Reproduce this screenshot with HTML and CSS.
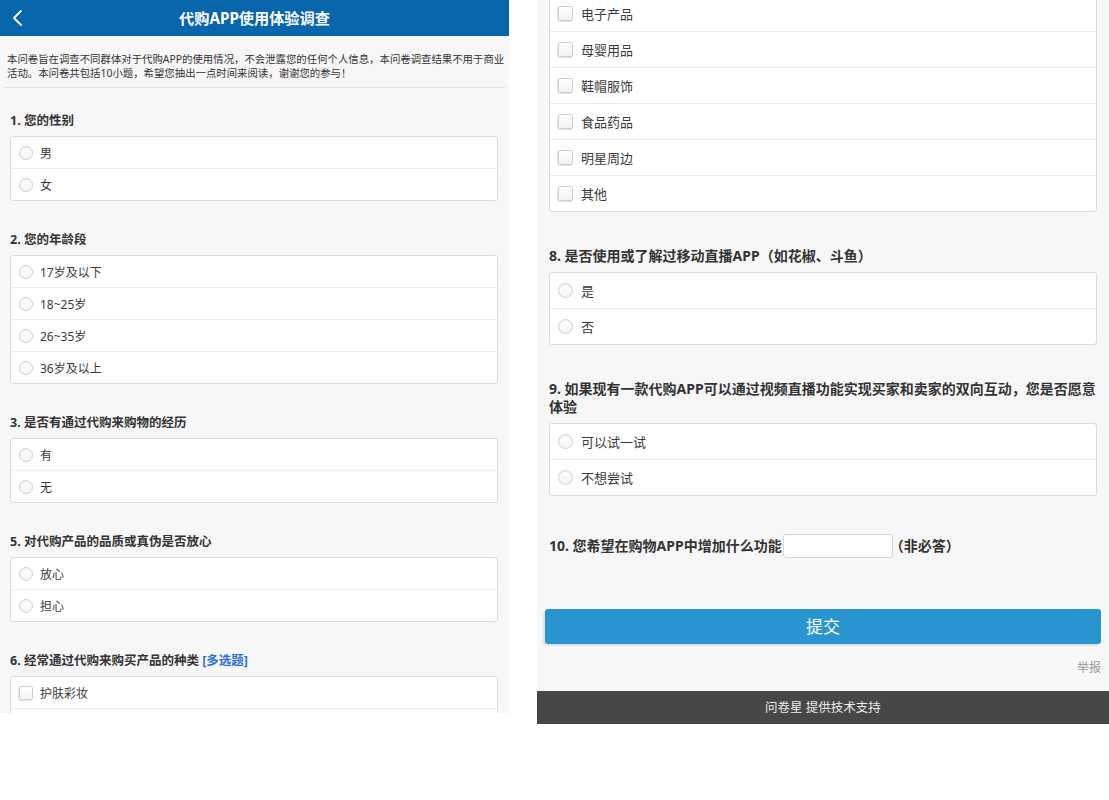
FILE: index.html
```html
<!DOCTYPE html>
<html lang="zh-CN">
<head>
<meta charset="utf-8">
<title>代购APP使用体验调查</title>
<link rel="stylesheet" href="styles.css">
</head>
<body>
<div class="page">
  <section class="panel panel-left">
    <header class="topbar">
      <span class="back"><svg width="12" height="18" viewBox="0 0 12 18"><polyline points="9,2 2,9 9,16" fill="none" stroke="#fff" stroke-width="1.8" stroke-linecap="round" stroke-linejoin="round"/></svg></span>
      <h1 class="topbar-title">代购APP使用体验调查</h1>
      <span></span>
    </header>
    <p class="desc">本问卷旨在调查不同群体对于代购APP的使用情况，不会泄露您的任何个人信息，本问卷调查结果不用于商业活动。本问卷共包括10小题，希望您抽出一点时间来阅读，谢谢您的参与！</p>
    <div class="questions">
      <div class="q">
        <div class="q-title">1. 您的性别</div>
        <div class="box">
          <div class="opt"><span class="radio"></span>男</div>
          <div class="opt"><span class="radio"></span>女</div>
        </div>
      </div>
      <div class="q">
        <div class="q-title">2. 您的年龄段</div>
        <div class="box">
          <div class="opt"><span class="radio"></span>17岁及以下</div>
          <div class="opt"><span class="radio"></span>18~25岁</div>
          <div class="opt"><span class="radio"></span>26~35岁</div>
          <div class="opt"><span class="radio"></span>36岁及以上</div>
        </div>
      </div>
      <div class="q">
        <div class="q-title">3. 是否有通过代购来购物的经历</div>
        <div class="box">
          <div class="opt"><span class="radio"></span>有</div>
          <div class="opt"><span class="radio"></span>无</div>
        </div>
      </div>
      <div class="q">
        <div class="q-title">5. 对代购产品的品质或真伪是否放心</div>
        <div class="box">
          <div class="opt"><span class="radio"></span>放心</div>
          <div class="opt"><span class="radio"></span>担心</div>
        </div>
      </div>
      <div class="q">
        <div class="q-title">6. 经常通过代购来购买产品的种类 <span class="multi">[多选题]</span></div>
        <div class="box">
          <div class="opt"><span class="check"></span>护肤彩妆</div>
          <div class="opt"></div>
        </div>
      </div>
    </div>
  </section>

  <section class="panel panel-right">
    <div class="right-main">
      <div class="questions-r">
        <div class="q q-first">
          <div class="box">
            <div class="opt"><span class="check"></span>电子产品</div>
            <div class="opt"><span class="check"></span>母婴用品</div>
            <div class="opt"><span class="check"></span>鞋帽服饰</div>
            <div class="opt"><span class="check"></span>食品药品</div>
            <div class="opt"><span class="check"></span>明星周边</div>
            <div class="opt"><span class="check"></span>其他</div>
          </div>
        </div>
        <div class="q">
          <div class="q-title">8. 是否使用或了解过移动直播APP（如花椒、斗鱼）</div>
          <div class="box">
            <div class="opt"><span class="radio"></span>是</div>
            <div class="opt"><span class="radio"></span>否</div>
          </div>
        </div>
        <div class="q">
          <div class="q-title">9. 如果现有一款代购APP可以通过视频直播功能实现买家和卖家的双向互动，您是否愿意体验</div>
          <div class="box">
            <div class="opt"><span class="radio"></span>可以试一试</div>
            <div class="opt"><span class="radio"></span>不想尝试</div>
          </div>
        </div>
        <div class="q q-fill">
          <span class="q-title">10. 您希望在购物APP中增加什么功能</span><span class="fill-input"></span><span class="q-title optional">（非必答）</span>
        </div>
      </div>
      <div class="submit-wrap">
        <div class="submit">提交</div>
      </div>
      <div class="report">举报</div>
    </div>
    <footer class="footer">问卷星 提供技术支持</footer>
  </section>
</div>
</body>
</html>
```

FILE: styles.css
```css
* { box-sizing: border-box; }
html, body {
  margin: 0;
  padding: 0;
  background: #ffffff;
}
body {
  font-family: "Noto Sans", "Noto Sans CJK SC", sans-serif;
  color: #333333;
}
.page {
  display: flex;
  align-items: flex-start;
  gap: 28px;
}
.panel {
  background: #f7f7f7;
  overflow: hidden;
}
.panel-left {
  width: 509px;
  height: 713px;
}
.panel-right {
  width: 572px;
}

/* header */
.topbar {
  height: 36px;
  background: #0866ad;
  display: grid;
  grid-template-columns: 1fr auto 1fr;
  align-items: center;
}
.back {
  display: flex;
  align-items: center;
  padding-left: 12px;
  height: 36px;
}
.topbar-title {
  margin: 0;
  font-size: 15.2px;
  font-weight: bold;
  color: #ffffff;
  line-height: 36px;
}

.desc {
  margin: 0 3px;
  padding: 16px 1px 7px 4px;
  font-size: 10.4px;
  line-height: 14px;
  color: #333;
  border-bottom: 1px solid #e4e4e4;
}

/* questions (left) */
.questions {
  padding: 0 11px 0 10px;
}
.q {
  margin-top: 31px;
}
.questions > .q:first-child {
  margin-top: 25px;
}
.q-title {
  font-size: 12.5px;
  line-height: 16px;
  font-weight: bold;
  color: #333;
  margin-bottom: 7px;
}
.multi {
  color: #2a6fdb;
}
.box {
  background: #ffffff;
  border: 1px solid #dcdcdc;
  border-radius: 3px;
}
.opt {
  height: 31px;
  display: flex;
  align-items: center;
  gap: 7px;
  padding-left: 8px;
  font-size: 12px;
  color: #3a3a3a;
}
.opt + .opt {
  border-top: 1px solid #ececec;
  height: 32px;
}
.radio {
  width: 14px;
  height: 14px;
  border-radius: 50%;
  border: 1px solid #cfcfcf;
  background: linear-gradient(#ffffff, #f4f4f4);
  box-shadow: inset 0 1px 1px rgba(0,0,0,0.06);
  flex: none;
}
.check {
  width: 14px;
  height: 14px;
  border-radius: 2px;
  border: 1px solid #cfcfcf;
  background: linear-gradient(#ffffff, #f3f3f3);
  box-shadow: -1px 1px 1px #e2e2e2;
  flex: none;
}

/* right panel */
.right-main {
  padding: 0 12px;
}
.questions-r {
  margin-top: -5px;
}
.questions-r .q {
  margin-top: 35px;
}
.questions-r .q.q-first {
  margin-top: 0;
}
.questions-r .q-title {
  font-size: 14px;
  line-height: 18px;
  margin-bottom: 7px;
}
.questions-r .opt {
  height: 35px;
  font-size: 13px;
  gap: 8px;
}
.questions-r .opt + .opt {
  height: 36px;
}
.questions-r .radio,
.questions-r .check {
  width: 15px;
  height: 15px;
}
.questions-r .q-fill {
  display: flex;
  align-items: center;
  height: 28px;
  margin-top: 36px;
}
.q-fill .q-title {
  margin-bottom: 0;
}
.q-fill .optional {
  margin-left: -3px;
}
.fill-input {
  width: 110px;
  height: 24px;
  background: #ffffff;
  border: 1px solid #d6d6d6;
  border-radius: 3px;
  margin: 0 0 0 1px;
}
.submit-wrap {
  margin: 49px -4px 0;
}
.submit {
  height: 35px;
  background: #2894d0;
  border-radius: 3px;
  color: #ffffff;
  font-size: 17px;
  line-height: 35px;
  text-align: center;
  box-shadow: -2px 2px 1px #e2e2e2;
}
.report {
  margin: 16px -4px 0 0;
  text-align: right;
  font-size: 12px;
  line-height: 16px;
  color: #9a9a9a;
  padding-bottom: 15px;
}
.footer {
  height: 33px;
  background: #474747;
  color: #ececec;
  font-size: 12.5px;
  line-height: 33px;
  text-align: center;
}
```
